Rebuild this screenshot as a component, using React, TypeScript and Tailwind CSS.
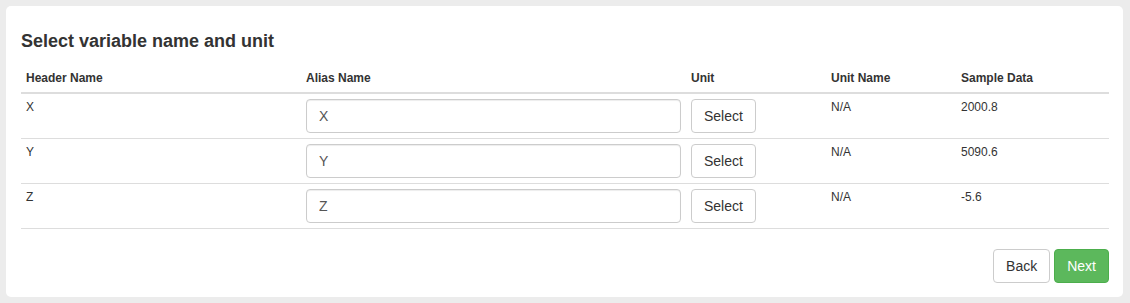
import React from "react";

type Row = { header: string; alias: string; unitName: string; sample: string };

const rows: Row[] = [
  { header: "X", alias: "X", unitName: "N/A", sample: "2000.8" },
  { header: "Y", alias: "Y", unitName: "N/A", sample: "5090.6" },
  { header: "Z", alias: "Z", unitName: "N/A", sample: "-5.6" },
];

export default function App() {
  return (
    <div
      className="min-h-screen bg-[#ececec] pt-[6px] pl-[6px] pr-[7px] text-[#333]"
      style={{ fontFamily: '"Liberation Sans", Arial, sans-serif' }}
    >
      <div className="w-[1117px] rounded-[5px] bg-white pt-[25px] pl-[15px] pr-[14px] pb-[14px]">
        <h4 className="text-[18px] font-bold leading-[20px]">Select variable name and unit</h4>

        <table className="mt-[14px] w-full table-fixed border-collapse text-[12px] leading-[17px]">
          <colgroup>
            <col className="w-[280px]" />
            <col className="w-[385px]" />
            <col className="w-[140px]" />
            <col className="w-[130px]" />
            <col />
          </colgroup>
          <thead>
            <tr className="border-b-2 border-[#ddd] text-left">
              <th className="px-[5px] pt-[5px] pb-[5px] font-bold">Header Name</th>
              <th className="px-[5px] pt-[5px] pb-[5px] font-bold">Alias Name</th>
              <th className="px-[5px] pt-[5px] pb-[5px] font-bold">Unit</th>
              <th className="px-[5px] pt-[5px] pb-[5px] font-bold">Unit Name</th>
              <th className="px-[5px] pt-[5px] pb-[5px] font-bold">Sample Data</th>
            </tr>
          </thead>
          <tbody>
            {rows.map((r) => (
              <tr key={r.header} className="border-b border-[#ddd] align-top">
                <td className="p-[5px]">{r.header}</td>
                <td className="p-[5px]">
                  <input
                    defaultValue={r.alias}
                    className="block h-[34px] w-full rounded-[4px] border border-[#ccc] px-[12px] text-[14px] text-[#555] shadow-[inset_0_1px_1px_rgba(0,0,0,0.075)] outline-none"
                  />
                </td>
                <td className="p-[5px]">
                  <button className="h-[34px] rounded-[4px] border border-[#ccc] bg-white px-[12px] text-[14px] text-[#333]">
                    Select
                  </button>
                </td>
                <td className="p-[5px]">{r.unitName}</td>
                <td className="p-[5px]">{r.sample}</td>
              </tr>
            ))}
          </tbody>
        </table>

        <div className="mt-[20px] flex justify-end gap-[4px]">
          <button className="h-[34px] rounded-[4px] border border-[#ccc] bg-white px-[12px] text-[14px] text-[#333]">
            Back
          </button>
          <button className="h-[34px] rounded-[4px] border border-[#4cae4c] bg-[#5cb85c] px-[12px] text-[14px] text-white">
            Next
          </button>
        </div>
      </div>
    </div>
  );
}
